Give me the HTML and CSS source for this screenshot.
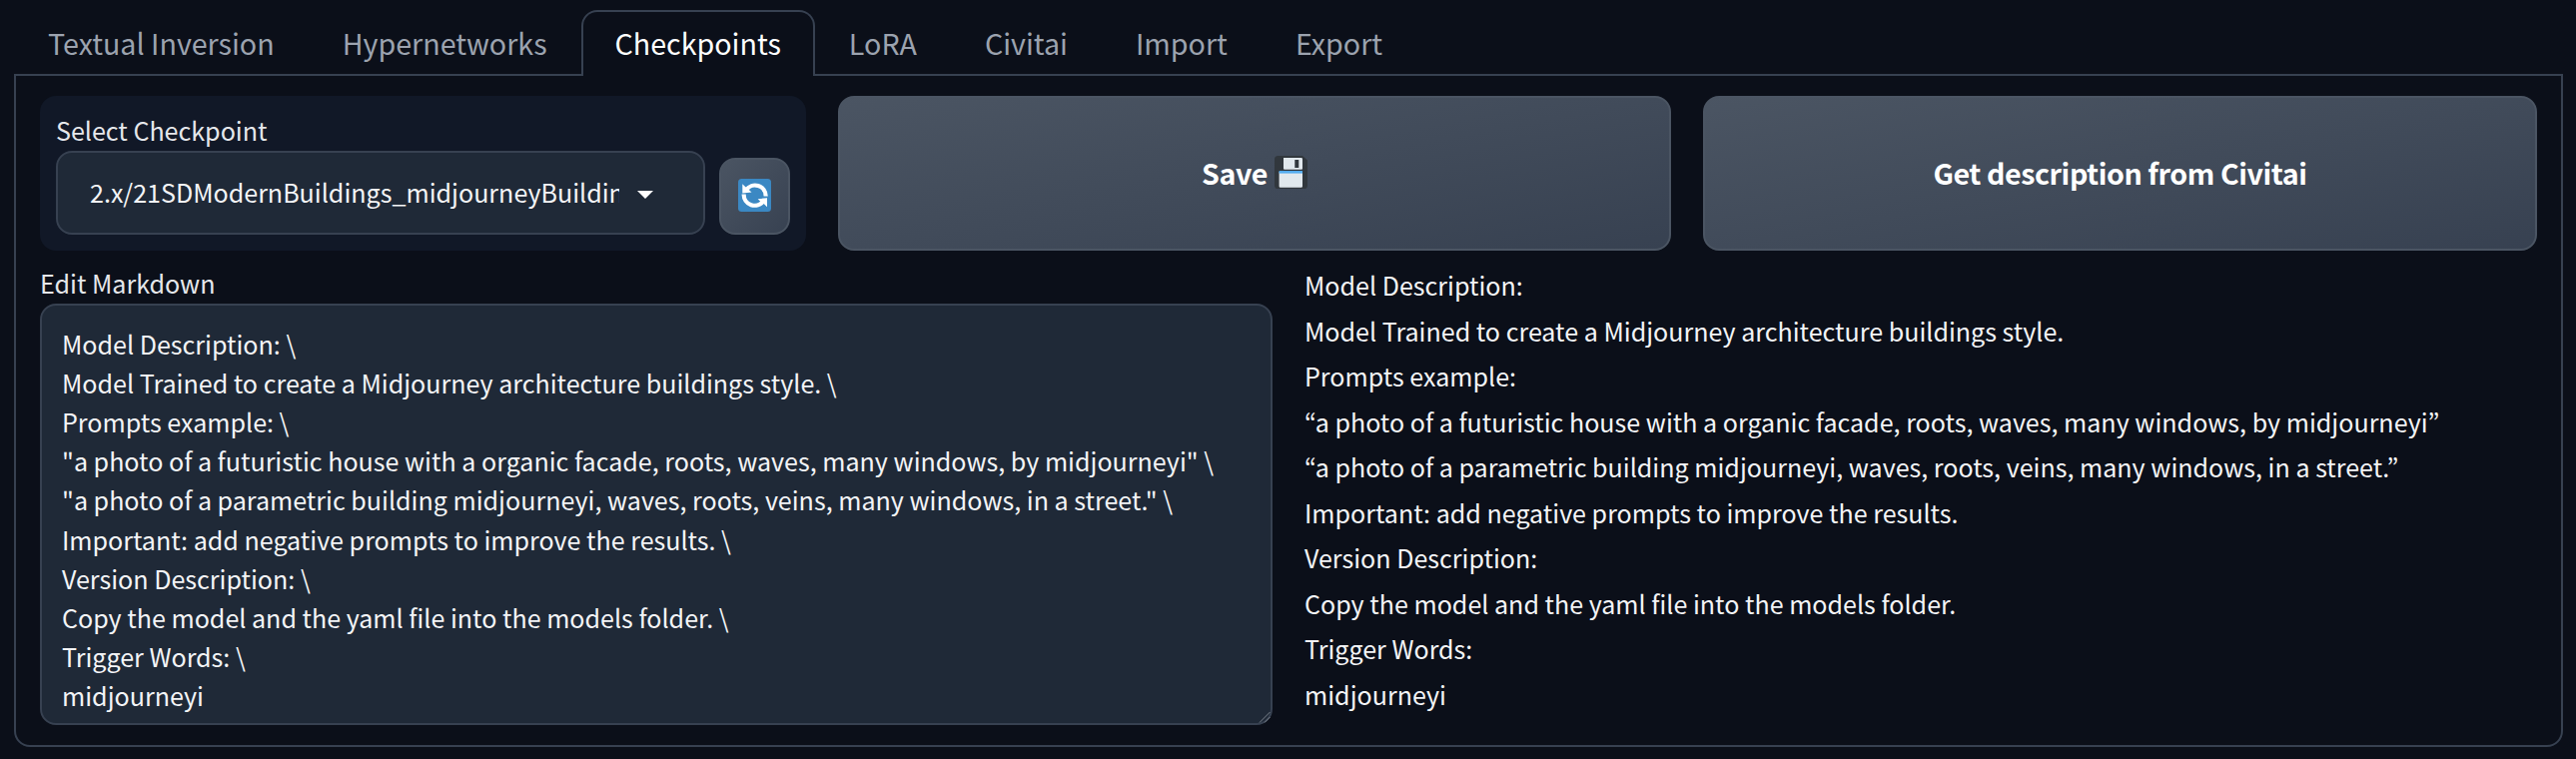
FILE: index.html
```html
<!DOCTYPE html>
<html lang="en">
<head>
<meta charset="utf-8">
<title>Checkpoints</title>
<link rel="stylesheet" href="styles.css">
</head>
<body>
<nav class="tabs">
  <button class="tab">Textual Inversion</button>
  <button class="tab">Hypernetworks</button>
  <button class="tab active">Checkpoints</button>
  <button class="tab">LoRA</button>
  <button class="tab">Civitai</button>
  <button class="tab">Import</button>
  <button class="tab">Export</button>
</nav>
<main class="panel">
  <section class="actions">
    <div class="picker">
      <div class="field">
        <span class="label">Select Checkpoint</span>
        <div class="select">
          <span class="value">2.x/21SDModernBuildings_midjourneyBuildin</span>
          <svg class="caret" viewBox="0 0 16 8"><path d="M0 0h16L8 8z" fill="#fff"/></svg>
        </div>
      </div>
      <button class="btn refresh" aria-label="Refresh">
        <svg viewBox="0 0 33 33" width="33" height="33">
          <rect width="33" height="33" rx="3.5" fill="#3b88c3"/>
          <g fill="none" stroke="#fff" stroke-width="4.2">
            <path d="M8 11.3A10.8 10.8 0 0 1 27.7 17.5"/>
            <path d="M25.3 22.2A10.8 10.8 0 0 1 5.7 15.5"/>
          </g>
          <path d="M4.3 5.2V14.4L13.5 13.6 10.8 10.9 7.2 8zM29 28.2V19.2L19.7 20.2 22.5 22.9 26.2 25.4z" fill="#fff"/>
        </svg>
      </button>
    </div>
    <button class="btn wide save"><span>Save</span>
      <svg class="disk" viewBox="0 0 33 33" width="33" height="33">
        <path d="M3.6 0H28l5 4.6V29.4a3.6 3.6 0 0 1-3.6 3.6H3.6A3.6 3.6 0 0 1 0 29.4V3.6A3.6 3.6 0 0 1 3.6 0z" fill="#31373d"/>
        <path d="M9.2 2H26.8a1.2 1.2 0 0 1 1.2 1.2V12.8a1 1 0 0 1-1 1H10a1 1 0 0 1-1-1V2z" fill="#e1e8ed"/>
        <path d="M20.3 4h4v8h-4z" fill="#31373d"/>
        <path d="M4.6 16H28V30.5a1.3 1.3 0 0 1-1.3 1.3H5.9a1.3 1.3 0 0 1-1.3-1.3z" fill="#e1e8ed"/>
        <path d="M4.6 15H28v2.6H4.6z" fill="#55acee"/>
      </svg>
    </button>
    <button class="btn wide"><span>Get description from Civitai</span></button>
  </section>
  <section class="content">
    <div class="editor">
      <span class="label">Edit Markdown</span>
      <div class="textarea">Model Description: \
Model Trained to create a Midjourney architecture buildings style. \
Prompts example: \
"a photo of a futuristic house with a organic facade, roots, waves, many windows, by midjourneyi" \
"a photo of a parametric building midjourneyi, waves, roots, veins, many windows, in a street." \
Important: add negative prompts to improve the results. \
Version Description: \
Copy the model and the yaml file into the models folder. \
Trigger Words: \
midjourneyi<svg class="grip" viewBox="0 0 12 12"><path d="M1 11.5L11.5 1M6 11.5L11.5 6" fill="none" stroke="#7b828c" stroke-width="1"/></svg></div>
    </div>
    <div class="preview">Model Description:
Model Trained to create a Midjourney architecture buildings style.
Prompts example:
“a photo of a futuristic house with a organic facade, roots, waves, many windows, by midjourneyi”
“a photo of a parametric building midjourneyi, waves, roots, veins, many windows, in a street.”
Important: add negative prompts to improve the results.
Version Description:
Copy the model and the yaml file into the models folder.
Trigger Words:
midjourneyi</div>
  </section>
</main>
</body>
</html>
```
FILE: styles.css
```css
* { box-sizing: border-box; }
body {
  margin: 0;
  height: 760px;
  padding: 10px 13px 0 14px;
  overflow: hidden;
  background: #0b0f19;
  color: #f3f4f6;
  font-family: "Noto Sans CJK SC", "Noto Sans CJK JP", sans-serif;
  font-size: 25.07px;
}
button { font: inherit; color: inherit; margin: 0; padding: 0; }
.tabs { display: flex; height: 66px; position: relative; z-index: 1; }
.tab {
  height: 66px;
  padding: 0 32px 2px;
  border: 2px solid transparent;
  border-bottom: 0;
  border-radius: 16px 16px 0 0;
  background: transparent;
  color: #9ca3af;
  font-size: 28.65px;
  line-height: 60px;
  white-space: nowrap;
}
.tab.active { background: #0b0f19; border-color: #374151; color: #fff; }
.panel {
  height: 674px;
  margin-top: -2px;
  padding: 20px 24px;
  border: 2px solid #374151;
  border-radius: 0 0 16px 16px;
}
.actions { display: flex; gap: 32px; height: 155px; }
.picker {
  display: flex;
  align-items: flex-end;
  gap: 14px;
  width: 767px;
  padding: 16px;
  border-radius: 16px;
  background: #111827;
}
.field { width: 650px; }
.label { display: block; padding-bottom: 2px; line-height: 37px; white-space: nowrap; color: #e5e7eb; }
.select {
  display: flex;
  align-items: center;
  height: 84px;
  padding: 0 50px 0 32px;
  border: 2px solid #374151;
  border-radius: 16px;
  background: #1f2937;
}
.value { width: 531px; overflow: hidden; padding-bottom: 2px; white-space: nowrap; color: #f3f4f6; line-height: 40px; }
.caret { width: 16px; height: 8px; margin: 4px 0 0 18px; flex: none; }
.btn {
  display: flex;
  align-items: center;
  justify-content: center;
  padding-bottom: 2px;
  border: 2px solid #4b5563;
  border-radius: 16px;
  background: linear-gradient(to bottom right, #4b5563, #374151) border-box;
  color: #fff;
}
.refresh { width: 71px; height: 77px; }
.wide { flex: 1; gap: 7px; font-size: 28.65px; font-weight: 600; letter-spacing: -0.45px; white-space: nowrap; }
.save { flex: 0 0 834px; }
.content { display: flex; gap: 32px; }
.editor { width: 1234px; padding-top: 14px; }
.textarea {
  position: relative;
  height: 422px;
  padding: 18.5px 20px;
  border: 2px solid #374151;
  border-radius: 16px;
  background: #1f2937;
  line-height: 39.2px;
  white-space: pre;
}
.grip { position: absolute; right: 0; bottom: 0; width: 12px; height: 12px; }
.preview { padding-top: 12px; font-family: "Noto Sans CJK KR", sans-serif; line-height: 45.5px; white-space: pre; }
```
